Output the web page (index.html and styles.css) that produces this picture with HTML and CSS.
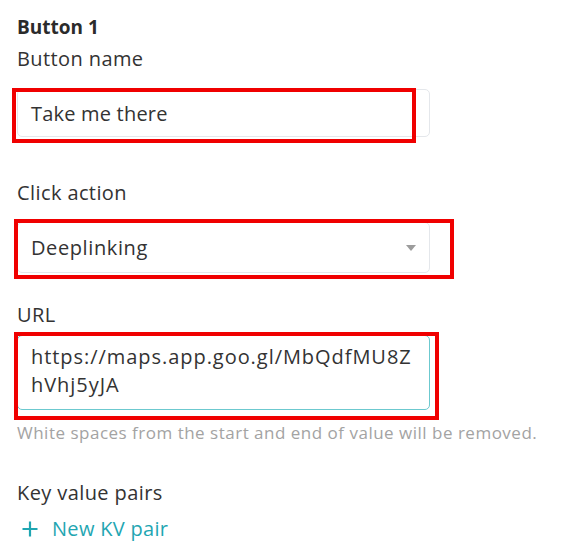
FILE: index.html
```html
<!DOCTYPE html>
<html lang="en">
<head>
<meta charset="utf-8">
<title>Button 1</title>
<link rel="stylesheet" href="styles.css">
</head>
<body>
<div class="panel">
  <div class="title">Button 1</div>
  <div class="label label-first">Button name</div>
  <div class="field field-name">
    <div class="input">Take me there</div>
    <div class="mark mark-name"></div>
  </div>

  <div class="label label-action">Click action</div>
  <div class="field field-action">
    <div class="input select">
      <span class="select-value">Deeplinking</span>
      <span class="caret"></span>
    </div>
    <div class="mark mark-action"></div>
  </div>

  <div class="label label-url">URL</div>
  <div class="field field-url">
    <div class="input textarea">https://maps.app.goo.gl/MbQdfMU8Z<br>hVhj5yJA</div>
    <div class="mark mark-url"></div>
  </div>
  <div class="help">White spaces from the start and end of value will be removed.</div>

  <div class="label label-kv">Key value pairs</div>
  <div class="add">
    <svg class="plus" width="18" height="18" viewBox="0 0 18 18" aria-hidden="true">
      <path d="M9 1.5v15M1.5 9h15" stroke="currentColor" stroke-width="2.2" fill="none"/>
    </svg>
    <span>New KV pair</span>
  </div>
</div>
</body>
</html>
```

FILE: styles.css
```css
* { box-sizing: border-box; }

html, body {
  margin: 0;
  padding: 0;
  background: #ffffff;
}

body {
  font-family: "Open Sans", "Noto Sans", sans-serif;
  color: #333333;
}

.panel {
  display: flex;
  flex-direction: column;
  align-items: flex-start;
  padding: 15px 0 0 17px;
  width: 570px;
}

.title {
  font-size: 19px;
  font-weight: 700;
  line-height: 24px;
  color: #2b2b2b;
}

.label {
  font-size: 20px;
  line-height: 24px;
  letter-spacing: 0.4px;
  color: #333333;
}

.label-first { margin-top: 8px; }
.label-action { margin-top: 44px; }
.label-url { margin-top: 30px; }
.label-kv { margin-top: 37px; }

.field {
  position: relative;
  width: 413px;
}

.field-name { margin-top: 18px; }
.field-action { margin-top: 17px; }
.field-url { margin-top: 8px; }

.input {
  width: 100%;
  height: 48px;
  display: flex;
  align-items: center;
  padding: 0 13px;
  border: 1px solid #e4e7eb;
  border-radius: 5px;
  background: #ffffff;
  font-size: 20px;
  letter-spacing: 0.2px;
  color: #333333;
}

.select {
  height: 51px;
  justify-content: space-between;
  letter-spacing: 0.6px;
}

.caret {
  width: 0;
  height: 0;
  margin-right: 0;
  border-left: 5px solid transparent;
  border-right: 5px solid transparent;
  border-top: 6px solid #9c9c9c;
}

.textarea {
  display: block;
  height: 75px;
  padding-top: 7px;
  line-height: 28px;
  letter-spacing: 0.95px;
  border-color: #6cc9cf;
}

.mark {
  position: absolute;
  border: 4px solid #f00000;
  pointer-events: none;
}

.mark-name { left: -5px; top: -1px; width: 404px; height: 55px; }
.mark-action { left: -3px; top: -3px; width: 440px; height: 60px; }
.mark-url { left: -3px; top: -3px; width: 425px; height: 88px; }

.help {
  margin-top: 12px;
  font-size: 17px;
  line-height: 22px;
  letter-spacing: 0.5px;
  color: #a3a3a3;
}

.add {
  margin-top: 12px;
  display: flex;
  align-items: center;
  gap: 13px;
  padding-left: 4px;
  font-size: 20px;
  line-height: 24px;
  letter-spacing: 0.3px;
  color: #1fa6b2;
}

.plus { display: block; }
```
